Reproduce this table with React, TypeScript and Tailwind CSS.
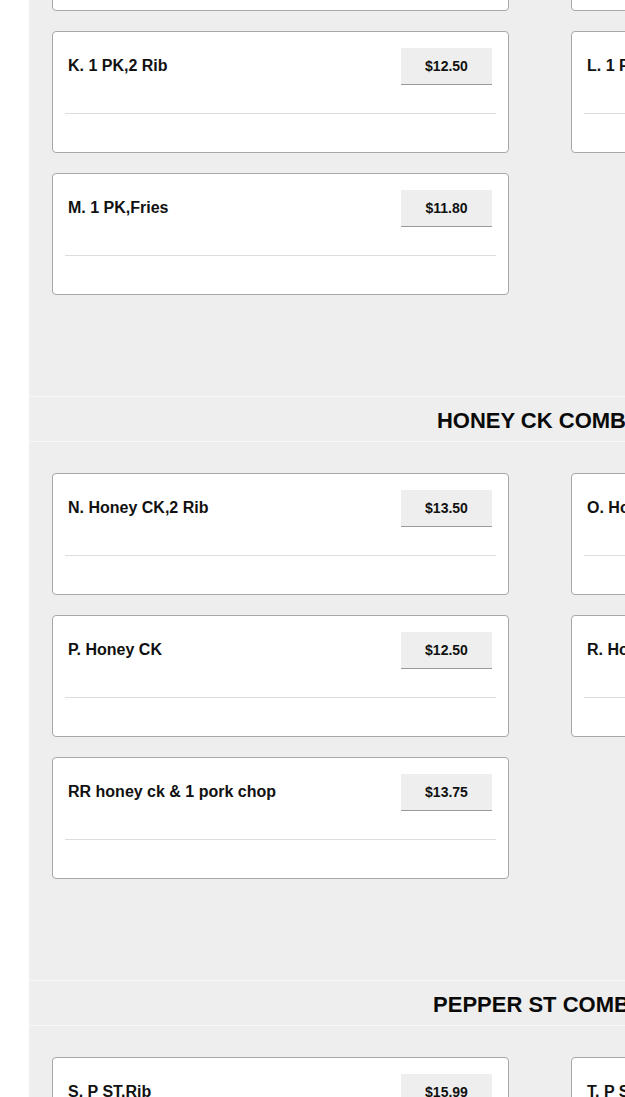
type Item = { name: string; price: string };

const sections: { title?: string; items: Item[] }[] = [
  {
    items: [
      { name: 'I. 1 PK', price: '$11.50' },
      { name: 'J. 1 PK', price: '$11.50' },
      { name: 'K. 1 PK,2 Rib', price: '$12.50' },
      { name: 'L. 1 PK,2 Wing', price: '$12.50' },
      { name: 'M. 1 PK,Fries', price: '$11.80' },
    ],
  },
  {
    title: 'HONEY CK COMBO',
    items: [
      { name: 'N. Honey CK,2 Rib', price: '$13.50' },
      { name: 'O. Honey CK,2 Wing', price: '$13.50' },
      { name: 'P. Honey CK', price: '$12.50' },
      { name: 'R. Honey CK,Fries', price: '$12.80' },
      { name: 'RR honey ck & 1 pork chop', price: '$13.75' },
    ],
  },
  {
    title: 'PEPPER ST COMBO',
    items: [
      { name: 'S. P ST.Rib', price: '$15.99' },
      { name: 'T. P ST,2 Wing', price: '$15.99' },
    ],
  },
];

function Card({ item }: { item: Item }) {
  return (
    <div className="h-[122px] bg-white border border-[#a8a8a8] rounded-[4px] flex flex-col">
      <div className="flex items-start justify-between pl-[15px] pr-[16px] pt-[16px]">
        <span className="text-[16px] font-bold text-[#111] leading-[36px]">{item.name}</span>
        <button className="w-[91px] h-[37px] bg-[#eeeeee] border-b border-[#9a9a9a] text-[14px] font-bold text-[#111]">
          {item.price}
        </button>
      </div>
      <div className="mt-[28px] mx-[12px] border-t border-[#dddddd]" />
    </div>
  );
}

export default function App() {
  return (
    <div className="w-[625px] h-[1097px] overflow-hidden flex bg-white" style={{ fontFamily: '"Liberation Sans", Arial, sans-serif' }}>
      <div className="w-[29px] shrink-0 bg-white" />
      <div className="w-[1022px] shrink-0 bg-[#eeeeee] -mt-[133px]">
        {sections.map((s, i) => (
          <div key={i}>
            {s.title && (
              <div className="mt-[101px] h-[46px] border-y border-[#f9f9f9] flex items-center justify-center pt-[3px]">
                <h2 className="text-[22px] font-bold text-[#0a0a0a]">{s.title}</h2>
              </div>
            )}
            <div className={`grid grid-cols-[457px_457px] gap-x-[62px] gap-y-[20px] px-[23px] ${s.title ? 'pt-[31px]' : 'pt-[22px]'}`}>
              {s.items.map((it) => (
                <Card key={it.name} item={it} />
              ))}
            </div>
          </div>
        ))}
      </div>
    </div>
  );
}
